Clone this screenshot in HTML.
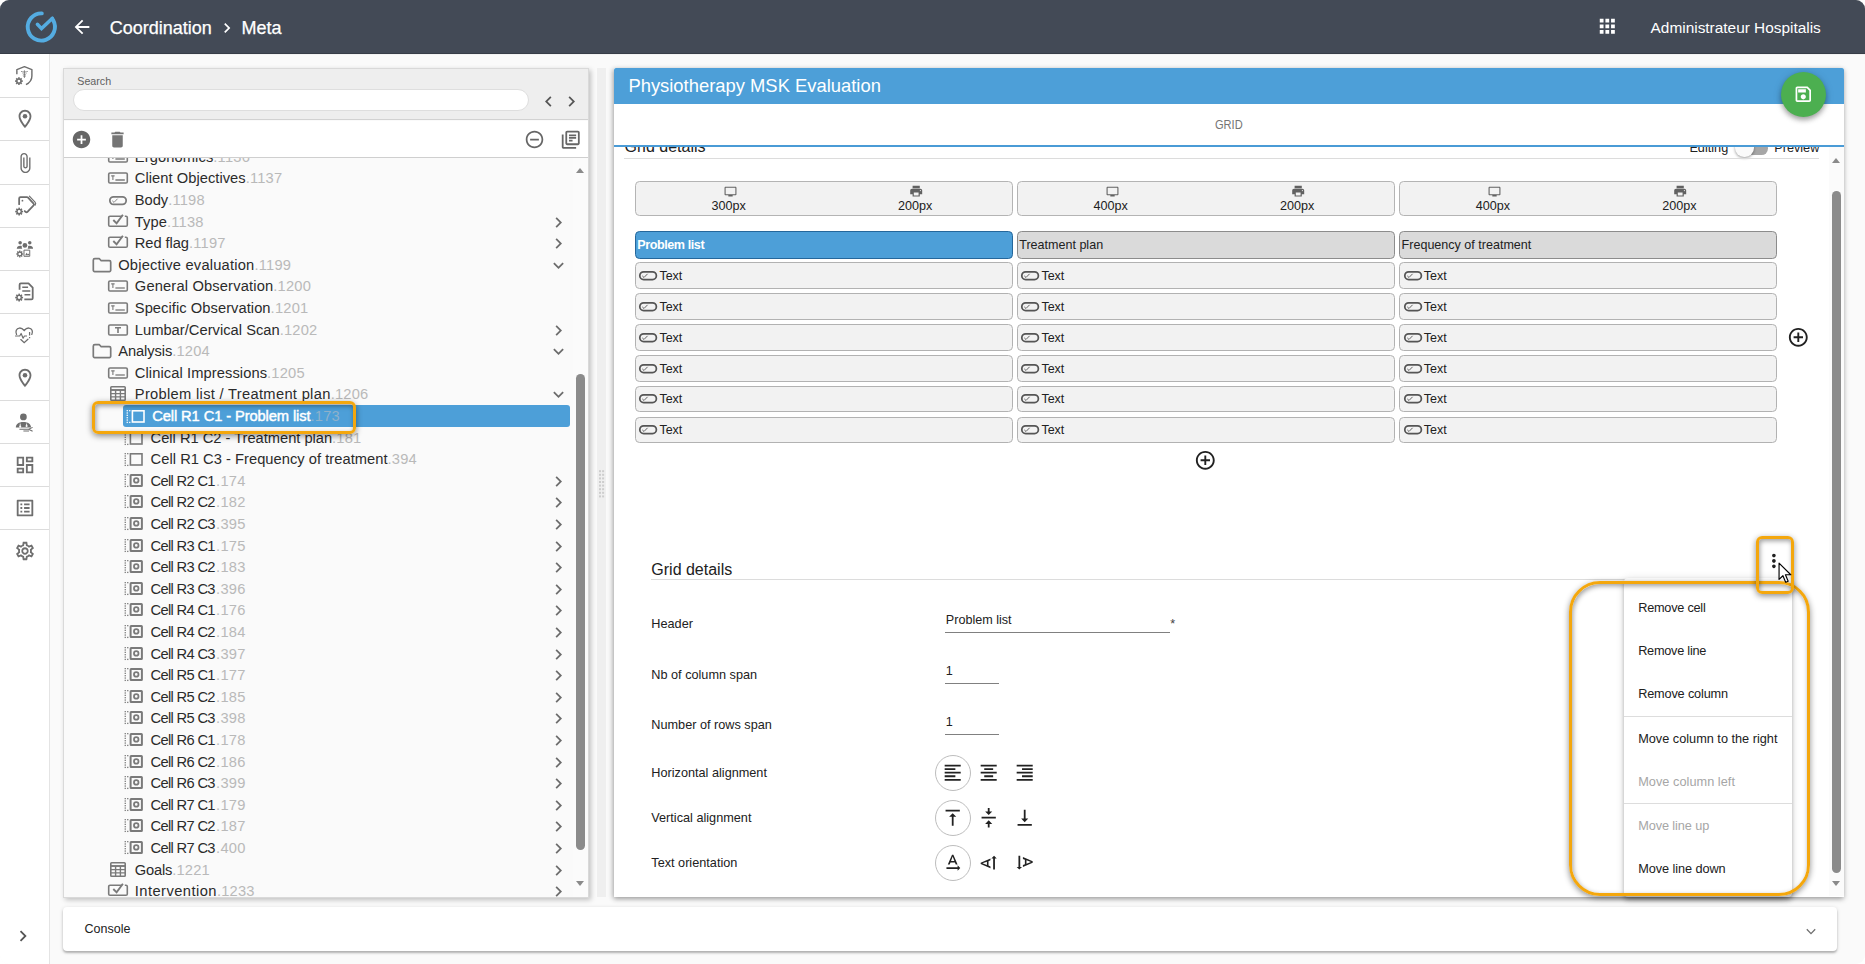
<!DOCTYPE html>
<html lang="en">
<head>
<meta charset="utf-8">
<title>Coordination &gt; Meta</title>
<style>
*{box-sizing:border-box;margin:0;padding:0}
html,body{width:1865px;height:964px;overflow:hidden;background:#fff}
body{font-family:"Liberation Sans",sans-serif;color:#212121;position:relative}
#app{position:absolute;left:0;top:0;width:1865px;height:964px;background:#fafafa;border-radius:9px;overflow:hidden}
.abs,.ic{position:absolute}
svg.ic{display:block;overflow:visible}
/* top bar */
#top{position:absolute;left:0;top:0;width:1865px;height:54px;background:#434a56;border-bottom:1px solid #373d47;box-shadow:0 0 1px rgba(0,0,0,.2)}
#top .t{position:absolute;color:#fff;font-size:18px;line-height:22px;top:16.5px;white-space:nowrap;-webkit-text-stroke:0.25px #fff}
#top .u{position:absolute;color:#fff;font-size:15.4px;line-height:20px;top:17.6px;left:1650.6px;white-space:nowrap}
/* sidebar */
#side{position:absolute;left:0;top:54px;width:50px;height:910px;background:#fff;border-right:1px solid #e4e4e4}
.ssep{position:absolute;left:0;width:49px;height:1px;background:#dcdcdc}
/* left panel */
#lp{position:absolute;left:63px;top:68px;width:526px;height:829.5px;background:#fafafa;border:1px solid #d9d9d9;box-shadow:2px 2px 5px rgba(0,0,0,.23)}
#lp-search{position:absolute;left:64px;top:69px;width:524px;height:51px;background:#eeeeee;border-bottom:1px solid #d2d2d2}
#lp-tools{position:absolute;left:64px;top:121px;width:524px;height:37px;background:#fff;border-bottom:1px solid #cfcfcf}
#slabel{position:absolute;left:77.3px;top:75.3px;font-size:10.7px;line-height:13px;color:#616161}
#sinput{position:absolute;left:73px;top:88.6px;width:456px;height:22.4px;background:#fff;border:1px solid #dedede;border-radius:11.2px}
#treeclip{position:absolute;left:64px;top:158px;width:524px;height:739px;overflow:hidden}
#tree{position:absolute;left:-64px;top:-158px;width:600px;height:964px}
.tr{position:absolute;font-size:14.7px;line-height:22px;height:22px;white-space:nowrap;color:#2b2b2b}
.tr .n{color:#b9b9b9;letter-spacing:.2px}
.tr.sel{color:#fff;-webkit-text-stroke:0.45px #fff}
.tr.sel .n{color:#8fb1cb;-webkit-text-stroke:0}
.selrow{position:absolute;left:123.3px;width:446.7px;height:21.400px;background:#4d9fd8;border-radius:3px}
#tscroll{position:absolute;left:573px;top:158px;width:15px;height:739px;background:#fbfbfb}
.thumb{position:absolute;background:#8b8b8b;border-radius:4.5px}
.arr{position:absolute;width:0;height:0;border-left:4.6px solid transparent;border-right:4.6px solid transparent}
.arr.up{border-bottom:5px solid #8a8a8a}
.arr.dn{border-top:5px solid #8a8a8a}
.hl{position:absolute;border:3.1px solid #f4a70d;box-shadow:0 2px 6px rgba(0,0,0,.45), inset 1px 2px 5px rgba(0,0,0,.38)}
/* splitter */
#split{position:absolute;left:597px;top:68px;width:9px;height:829px;background:#efefef}
/* right panel */
#rp{position:absolute;left:614px;top:68px;width:1230px;height:828.5px;background:#fff;box-shadow:0 2px 5px rgba(0,0,0,.3), -2px 1px 5px rgba(0,0,0,.13)}
#rp-title{position:absolute;left:614px;top:68px;width:1230px;height:36px;background:#4d9fd8;border-radius:2px 2px 0 0}
#rp-title span{position:absolute;left:14.4px;top:6px;font-size:18.4px;line-height:24px;color:#fff;white-space:nowrap}
#rp-line{position:absolute;left:614px;top:145px;width:1230px;height:2px;background:#4a9bd6}
#gridtab{position:absolute;left:1215.200px;top:118.400px;font-size:12.600px;line-height:14px;color:#757575;transform:scaleX(.88);transform-origin:0 0}
#fab{position:absolute;left:1781px;top:72px;width:45px;height:45px;border-radius:50%;background:#4caf50;box-shadow:0 3px 5px rgba(0,0,0,.3),0 1px 8px rgba(0,0,0,.15)}
#rclip{position:absolute;left:614px;top:147px;width:1230px;height:749.5px;overflow:hidden}
#rin{position:absolute;left:-614px;top:-147px;width:1865px;height:964px}
.rule{position:absolute;height:1px;background:#dcdcdc}
.cbox{position:absolute;top:181.2px;height:34.6px;background:#f2f2f2;border:1px solid #b4b4b4;border-radius:4.5px}
.cpx{position:absolute;top:198.6px;width:60px;text-align:center;font-size:12.6px;line-height:15px;color:#212121}
.hcell{position:absolute;top:231.2px;height:27.6px;background:#dadada;border:1px solid #8c8c8c;border-radius:4.5px;font-size:12.55px;line-height:26.800px;padding-left:1.2px;white-space:nowrap;color:#212121}
.hcell.hsel{background:#4d9fd8;border-color:#25679b;color:#fff;font-weight:bold;letter-spacing:-0.42px;font-size:12.6px}
.tcell{position:absolute;background:#f2f2f2;border:1px solid #b2b2b2;border-radius:4.5px}
.ttxt{position:absolute;font-size:12.5px;line-height:16px;color:#212121}
.lbl{position:absolute;left:651.3px;font-size:12.7px;line-height:16px;color:#212121;white-space:nowrap}
.val{position:absolute;left:945.8px;font-size:12.6px;line-height:16px;color:#212121;white-space:nowrap}
.ul{position:absolute;left:945px;height:1px;background:#808080}
.circ{position:absolute;width:36px;height:36px;border:1px solid #bdbdbd;border-radius:50%;left:935.1px}
#h2{position:absolute;left:651.3px;top:560.4px;font-size:16px;line-height:20px;color:#212121;white-space:nowrap}
/* menu */
#menu{position:absolute;left:1624px;top:578px;width:168px;height:319px;background:#fff;border-radius:4px;box-shadow:0 2px 4px -1px rgba(0,0,0,.2),0 4px 5px rgba(0,0,0,.14),0 1px 10px rgba(0,0,0,.12)}
.mi{position:absolute;left:1638.2px;font-size:12.72px;line-height:16px;color:#212121;white-space:nowrap}
.mi.dis{color:#a6a6a6}
.msep{position:absolute;left:1624px;width:168px;height:1px;background:#dddddd}
/* console */
#cons{position:absolute;left:63px;top:907px;width:1773.5px;height:43.6px;background:#fff;border-radius:4px;box-shadow:0 2px 2px rgba(0,0,0,.22),0 1px 4px rgba(0,0,0,.14)}
#cons span{position:absolute;left:21.6px;top:13.6px;font-size:12.5px;line-height:16px;color:#212121}
</style>
</head>
<body>
<div id="app">

<!-- right-edge background beyond panels -->
<div id="top">
  <svg class="ic" style="left:0;top:0" width="70" height="54" viewBox="0 0 70 54">
    <path d="M41.800 13.350A13.600 13.600 0 1 0 53.200 20.300L52.300 18.600" fill="none" stroke="#54ace1" stroke-width="3.900" stroke-linecap="round" stroke-linejoin="round"/>
    <path d="M37.400 24.300l4.100 4.300L52.200 18.400" fill="none" stroke="#54ace1" stroke-width="3.500" stroke-linecap="round" stroke-linejoin="miter"/>
  </svg>
  <svg class="ic" style="left:70.60px;top:16.20px" width="22.0" height="22.0" viewBox="0 0 24 24" fill="#ffffff"><path d="M20 11H7.83l5.59-5.59L12 4l-8 8 8 8 1.41-1.41L7.83 13H20v-2z"/></svg>
  <div class="t" style="left:109.8px">Coordination</div>
  <svg class="ic" style="left:217.40px;top:17.60px" width="20.0" height="20.0" viewBox="0 0 24 24" fill="#ffffff"><path d="M10 6L8.59 7.41 13.17 12l-4.58 4.59L10 18l6-6z"/></svg>
  <div class="t" style="left:241.6px">Meta</div>
  <svg class="ic" style="left:1596.20px;top:15.00px" width="22.6" height="22.6" viewBox="0 0 24 24" fill="#ffffff"><path d="M4 8h4V4H4v4zm6 12h4v-4h-4v4zm-6 0h4v-4H4v4zm0-6h4v-4H4v4zm6 0h4v-4h-4v4zm6-10v4h4V4h-4zm-6 4h4V4h-4v4zm6 6h4v-4h-4v4zm0 6h4v-4h-4v4z"/></svg>
  <div class="u">Administrateur Hospitalis</div>
</div>

<div id="side"></div>
<div class="ssep" style="top:97px"></div>
<div class="ssep" style="top:140px"></div>
<div class="ssep" style="top:184px"></div>
<div class="ssep" style="top:227px"></div>
<div class="ssep" style="top:270px"></div>
<div class="ssep" style="top:313px"></div>
<div class="ssep" style="top:356px"></div>
<div class="ssep" style="top:400px"></div>
<div class="ssep" style="top:443px"></div>
<div class="ssep" style="top:486px"></div>
<div class="ssep" style="top:529px"></div>
<svg class="ic" style="left:12.50px;top:64.10px;" width="23.4" height="23.4" viewBox="0 0 26 26"><path d="M4.300 11.500V6.200L12.700 3l8.300 3.200v7.100c0 4.200-2.600 7.600-6.600 9.600" fill="none" stroke="#6e6e6e" stroke-width="1.600" stroke-linejoin="round"/><path d="M12.700 7v8.500M9 8.200c1.600 1 5.800 1 7.400 0M10.700 10.800c1.400.9 3.200 1 4.200-.1M11 13c1 .8 2.600.9 3.400 0" stroke="#6e6e6e" stroke-width="0.900" fill="none"/><g transform="translate(6.6,19)"><rect x="-0.9" y="-4.300000000000001" width="1.8" height="2.2" transform="rotate(0)" fill="#6e6e6e"/><rect x="-0.9" y="-4.300000000000001" width="1.8" height="2.2" transform="rotate(45)" fill="#6e6e6e"/><rect x="-0.9" y="-4.300000000000001" width="1.8" height="2.2" transform="rotate(90)" fill="#6e6e6e"/><rect x="-0.9" y="-4.300000000000001" width="1.8" height="2.2" transform="rotate(135)" fill="#6e6e6e"/><rect x="-0.9" y="-4.300000000000001" width="1.8" height="2.2" transform="rotate(180)" fill="#6e6e6e"/><rect x="-0.9" y="-4.300000000000001" width="1.8" height="2.2" transform="rotate(225)" fill="#6e6e6e"/><rect x="-0.9" y="-4.300000000000001" width="1.8" height="2.2" transform="rotate(270)" fill="#6e6e6e"/><rect x="-0.9" y="-4.300000000000001" width="1.8" height="2.2" transform="rotate(315)" fill="#6e6e6e"/><circle r="2.3000000000000003" fill="none" stroke="#6e6e6e" stroke-width="1.5"/></g></svg>
<svg class="ic" style="left:13.60px;top:107.60px" width="22" height="22" viewBox="0 0 24 24" fill="#6e6e6e"><path d="M12 2C8.13 2 5 5.13 5 9c0 5.25 7 13 7 13s7-7.75 7-13c0-3.87-3.13-7-7-7zM7 9c0-2.76 2.24-5 5-5s5 2.24 5 5c0 2.88-2.88 7.19-5 9.88C9.92 16.21 7 11.85 7 9z"/><circle cx="12" cy="9" r="2.5"/></svg>
<svg class="ic" style="left:14.00px;top:152.20px" width="22" height="22" viewBox="0 0 24 24" fill="#6e6e6e"><path d="M16.5 6v11.5c0 2.21-1.79 4-4 4s-4-1.79-4-4V5c0-1.38 1.12-2.5 2.5-2.5s2.5 1.12 2.5 2.5v10.5c0 .55-.45 1-1 1s-1-.45-1-1V6H10v9.5c0 1.38 1.12 2.5 2.5 2.5s2.5-1.12 2.5-2.5V5c0-2.21-1.79-4-4-4S7 2.79 7 5v12.5c0 3.04 2.46 5.5 5.5 5.5s5.5-2.46 5.5-5.5V6h-1.5z"/></svg>
<svg class="ic" style="left:12.10px;top:192.70px;" width="25" height="25" viewBox="0 0 28 28"><path d="M8 12.500V6.200c0-.9.600-1.500 1.500-1.500h7.300c.5 0 .9.200 1.200.5l6.200 6.600c.6.600.6 1.500 0 2.100l-6.900 7.200c-.6.600-1.500.6-2.100 0l-.9-.9" fill="none" stroke="#6e6e6e" stroke-width="2" stroke-linecap="round" stroke-linejoin="round"/><path d="M19.500 3.600l6.300 6.600c.9 1 .9 2.300.1 3.300" fill="none" stroke="#6e6e6e" stroke-width="1.300" stroke-linecap="round"/><circle cx="11.700" cy="8.600" r="1" fill="#6e6e6e"/><g transform="translate(8,20.8)"><rect x="-0.9" y="-4.4" width="1.8" height="2.2" transform="rotate(0)" fill="#6e6e6e"/><rect x="-0.9" y="-4.4" width="1.8" height="2.2" transform="rotate(45)" fill="#6e6e6e"/><rect x="-0.9" y="-4.4" width="1.8" height="2.2" transform="rotate(90)" fill="#6e6e6e"/><rect x="-0.9" y="-4.4" width="1.8" height="2.2" transform="rotate(135)" fill="#6e6e6e"/><rect x="-0.9" y="-4.4" width="1.8" height="2.2" transform="rotate(180)" fill="#6e6e6e"/><rect x="-0.9" y="-4.4" width="1.8" height="2.2" transform="rotate(225)" fill="#6e6e6e"/><rect x="-0.9" y="-4.4" width="1.8" height="2.2" transform="rotate(270)" fill="#6e6e6e"/><rect x="-0.9" y="-4.4" width="1.8" height="2.2" transform="rotate(315)" fill="#6e6e6e"/><circle r="2.4" fill="none" stroke="#6e6e6e" stroke-width="1.5"/></g></svg>
<svg class="ic" style="left:13.85px;top:239.00px;" width="21.5" height="20" viewBox="0 0 28 26"><circle cx="8" cy="5" r="2.3" fill="#6e6e6e"/><circle cx="20.5" cy="5" r="2.3" fill="#6e6e6e"/><circle cx="14.2" cy="8.4" r="3.1" fill="#6e6e6e"/><path d="M3.6 12.6c0-2.4 2-3.9 4.4-3.9 1 0 1.7.2 2.3.6-.5 1-.2 2.2.6 3.3zM24.9 12.6c0-2.4-2-3.9-4.400-3.900-1 0-1.700.2-2.300.6.5 1 .2 2.200-.6 3.300z" fill="#6e6e6e"/><path d="M13 14.5h7.500v8H13z" fill="none" stroke="#6e6e6e" stroke-width="1.3"/><path d="M14.500 21l2-3 1.500 2 1-1.200 1.200 2.200z" fill="#6e6e6e"/><g transform="translate(7.5,19.5)"><rect x="-0.9" y="-4.5" width="1.8" height="2.2" transform="rotate(0)" fill="#6e6e6e"/><rect x="-0.9" y="-4.5" width="1.8" height="2.2" transform="rotate(45)" fill="#6e6e6e"/><rect x="-0.9" y="-4.5" width="1.8" height="2.2" transform="rotate(90)" fill="#6e6e6e"/><rect x="-0.9" y="-4.5" width="1.8" height="2.2" transform="rotate(135)" fill="#6e6e6e"/><rect x="-0.9" y="-4.5" width="1.8" height="2.2" transform="rotate(180)" fill="#6e6e6e"/><rect x="-0.9" y="-4.5" width="1.8" height="2.2" transform="rotate(225)" fill="#6e6e6e"/><rect x="-0.9" y="-4.5" width="1.8" height="2.2" transform="rotate(270)" fill="#6e6e6e"/><rect x="-0.9" y="-4.5" width="1.8" height="2.2" transform="rotate(315)" fill="#6e6e6e"/><circle r="2.5" fill="none" stroke="#6e6e6e" stroke-width="1.5"/></g></svg>
<svg class="ic" style="left:12.00px;top:279.10px;" width="25" height="25" viewBox="0 0 28 28"><path d="M8.500 12V6.300c0-.8.6-1.400 1.400-1.400h8.600l4.700 4.800v11.800c0 .8-.6 1.400-1.400 1.400h-8" fill="none" stroke="#6e6e6e" stroke-width="2" stroke-linejoin="round"/><path d="M11.500 9.300h6.500M11.500 13.500h9M14 17.700h6.500" stroke="#6e6e6e" stroke-width="1.800"/><g transform="translate(8,20.8)"><rect x="-0.9" y="-4.4" width="1.8" height="2.2" transform="rotate(0)" fill="#6e6e6e"/><rect x="-0.9" y="-4.4" width="1.8" height="2.2" transform="rotate(45)" fill="#6e6e6e"/><rect x="-0.9" y="-4.4" width="1.8" height="2.2" transform="rotate(90)" fill="#6e6e6e"/><rect x="-0.9" y="-4.4" width="1.8" height="2.2" transform="rotate(135)" fill="#6e6e6e"/><rect x="-0.9" y="-4.4" width="1.8" height="2.2" transform="rotate(180)" fill="#6e6e6e"/><rect x="-0.9" y="-4.4" width="1.8" height="2.2" transform="rotate(225)" fill="#6e6e6e"/><rect x="-0.9" y="-4.4" width="1.8" height="2.2" transform="rotate(270)" fill="#6e6e6e"/><rect x="-0.9" y="-4.4" width="1.8" height="2.2" transform="rotate(315)" fill="#6e6e6e"/><circle r="2.4" fill="none" stroke="#6e6e6e" stroke-width="1.5"/></g></svg>
<svg class="ic" style="left:13.10px;top:325.15px;" width="23" height="19.7" viewBox="0 0 28 24"><path d="M4.300 11.500C2.600 8.200 4 4 7.800 3.700c2.300-.2 4.200 1.100 5.800 3 1.600-1.900 3.500-3.200 5.800-3 3.800.3 5.200 4.500 3.500 7.800" fill="none" stroke="#6e6e6e" stroke-width="1.600" stroke-linecap="round"/><path d="M2.500 13.400h5.700l1.700-3.100 2.400 5.800 1.600-2.700h3.200" fill="none" stroke="#6e6e6e" stroke-width="1.400" stroke-linejoin="round"/><path d="M9.500 17.800l4.100 3.700 4.600-4.100" fill="none" stroke="#6e6e6e" stroke-width="1.600" stroke-linecap="round"/><path d="M20.200 8.500v4.300M20.200 14.600v1.600" stroke="#6e6e6e" stroke-width="1.500"/></svg>
<svg class="ic" style="left:13.60px;top:366.80px" width="22" height="22" viewBox="0 0 24 24" fill="#6e6e6e"><path d="M12 2C8.13 2 5 5.13 5 9c0 5.25 7 13 7 13s7-7.75 7-13c0-3.87-3.13-7-7-7zM7 9c0-2.76 2.24-5 5-5s5 2.24 5 5c0 2.88-2.88 7.19-5 9.88C9.92 16.21 7 11.85 7 9z"/><circle cx="12" cy="9" r="2.5"/></svg>
<svg class="ic" style="left:13.40px;top:411.60px;" width="22.4" height="20.8" viewBox="0 0 28 26"><circle cx="13" cy="6.200" r="4.200" fill="#6e6e6e"/><path d="M3.500 19.500c0-4.400 3.600-7 9.500-7s9.500 2.600 9.500 7z" fill="#6e6e6e"/><path d="M9 14.500v3.500M17 14.500v2.500" stroke="#fff" stroke-width="1.100"/><circle cx="9" cy="18.300" r="1.300" fill="#fff"/><circle cx="17" cy="17.500" r="1.300" fill="#fff"/><path d="M8 21.600h11.500M24.500 19.200l-5 2.400 5 2.400M13 23.800h7" stroke="#6e6e6e" stroke-width="1.300" fill="none"/></svg>
<svg class="ic" style="left:13.80px;top:453.60px" width="22" height="22" viewBox="0 0 24 24" fill="#6e6e6e"><path d="M19 5v2h-4V5h4M9 5v6H5V5h4m10 8v6h-4v-6h4M9 17v2H5v-2h4M21 3h-8v6h8V3zM11 3H3v10h8V3zm10 8h-8v10h8V11zm-10 4H3v6h8v-6z"/></svg>
<svg class="ic" style="left:13.60px;top:496.80px" width="22" height="22" viewBox="0 0 24 24" fill="#6e6e6e"><path d="M11 7h6v2h-6zm0 4h6v2h-6zm0 4h6v2h-6zM7 7h2v2H7zm0 4h2v2H7zm0 4h2v2H7zM20.1 3H3.9c-.5 0-.9.4-.9.9v16.2c0 .4.4.9.9.9h16.2c.4 0 .9-.5.9-.9V3.9c0-.5-.5-.9-.9-.9zM19 19H5V5h14v14z"/></svg>
<svg class="ic" style="left:13.60px;top:540.00px" width="22" height="22" viewBox="0 0 24 24" fill="#6e6e6e"><path d="M19.43 12.98c.04-.32.07-.64.07-.98 0-.34-.03-.66-.07-.98l2.11-1.65c.19-.15.24-.42.12-.64l-2-3.46c-.09-.16-.26-.25-.44-.25-.06 0-.12.01-.17.03l-2.49 1c-.52-.4-1.08-.73-1.69-.98l-.38-2.65C14.46 2.18 14.25 2 14 2h-4c-.25 0-.46.18-.49.42l-.38 2.65c-.61.25-1.17.59-1.69.98l-2.49-1c-.06-.02-.12-.03-.18-.03-.17 0-.34.09-.43.25l-2 3.46c-.13.22-.07.49.12.64l2.11 1.65c-.04.32-.07.65-.07.98 0 .33.03.66.07.98l-2.11 1.65c-.19.15-.24.42-.12.64l2 3.46c.09.16.26.25.44.25.06 0 .12-.01.17-.03l2.49-1c.52.4 1.08.73 1.69.98l.38 2.65c.03.24.24.42.49.42h4c.25 0 .46-.18.49-.42l.38-2.65c.61-.25 1.17-.59 1.69-.98l2.49 1c.06.02.12.03.18.03.17 0 .34-.09.43-.25l2-3.46c.12-.22.07-.49-.12-.64l-2.11-1.65zm-1.98-1.71c.04.31.05.52.05.73 0 .21-.02.43-.05.73l-.14 1.13.89.7 1.08.84-.7 1.21-1.27-.51-1.04-.42-.9.68c-.43.32-.84.56-1.25.73l-1.06.43-.16 1.13-.2 1.35h-1.4l-.19-1.35-.16-1.13-1.06-.43c-.43-.18-.83-.41-1.23-.71l-.91-.7-1.06.43-1.27.51-.7-1.21 1.08-.84.89-.7-.14-1.13c-.03-.31-.05-.54-.05-.74s.02-.43.05-.73l.14-1.13-.89-.7-1.08-.84.7-1.21 1.27.51 1.04.42.9-.68c.43-.32.84-.56 1.25-.73l1.06-.43.16-1.13.2-1.35h1.39l.19 1.35.16 1.13 1.06.43c.43.18.83.41 1.23.71l.91.7 1.06-.43 1.27-.51.7 1.21-1.07.85-.89.7.14 1.13zM12 8c-2.21 0-4 1.79-4 4s1.79 4 4 4 4-1.79 4-4-1.79-4-4-4zm0 6c-1.1 0-2-.9-2-2s.9-2 2-2 2 .9 2 2-.9 2-2 2z"/></svg>
<svg class="ic" style="left:12.30px;top:925.40px" width="22" height="22" viewBox="0 0 24 24" fill="#555"><path d="M10 6L8.59 7.41 13.17 12l-4.58 4.59L10 18l6-6z"/></svg>

<!-- left panel -->
<div id="lp"></div>
<div id="lp-search"></div>
<div id="slabel">Search</div>
<div id="sinput"></div>
<svg class="ic" style="left:537.90px;top:90.50px" width="21.0" height="21.0" viewBox="0 0 24 24" fill="#555555"><path d="M15.41 7.41L14 6l-6 6 6 6 1.41-1.41L10.83 12z"/></svg>
<svg class="ic" style="left:560.70px;top:90.50px" width="21.0" height="21.0" viewBox="0 0 24 24" fill="#555555"><path d="M10 6L8.59 7.41 13.17 12l-4.58 4.59L10 18l6-6z"/></svg>
<div id="lp-tools"></div>
<svg class="ic" style="left:71.40px;top:129.30px" width="21.0" height="21.0" viewBox="0 0 24 24" fill="#666666"><path d="M12 2C6.48 2 2 6.48 2 12s4.48 10 10 10 10-4.48 10-10S17.52 2 12 2zm5 11h-4v4h-2v-4H7v-2h4V7h2v4h4v2z"/></svg>
<svg class="ic" style="left:107.30px;top:129.30px" width="21.0" height="21.0" viewBox="0 0 24 24" fill="#757575"><path d="M6 19c0 1.1.9 2 2 2h8c1.1 0 2-.9 2-2V7H6v12zM19 4h-3.5l-1-1h-5l-1 1H5v2h14V4z"/></svg>
<svg class="ic" style="left:524.30px;top:129.10px" width="21.0" height="21.0" viewBox="0 0 24 24" fill="#666666"><path d="M7 11v2h10v-2H7zm5-9C6.48 2 2 6.48 2 12s4.48 10 10 10 10-4.48 10-10S17.52 2 12 2zm0 18c-4.41 0-8-3.59-8-8s3.59-8 8-8 8 3.59 8 8-3.59 8-8 8z"/></svg>
<svg class="ic" style="left:560.25px;top:128.95px" width="21.5" height="21.5" viewBox="0 0 24 24" fill="#666666"><path d="M4 6H2v14c0 1.1.9 2 2 2h14v-2H4V6zm16-4H8c-1.1 0-2 .9-2 2v12c0 1.1.9 2 2 2h12c1.1 0 2-.9 2-2V4c0-1.1-.9-2-2-2zm0 14H8V4h12v12zM10 9h8v2h-8zm0 3h4v2h-4zm0-6h8v2h-8z"/></svg>
<div id="treeclip"><div id="tree">
<svg class="ic" style="left:106.70px;top:150.00px;" width="22" height="14" viewBox="0 0 22 14"><rect x="1.7" y="2" width="18.600" height="10" rx="1.300" fill="none" stroke="#7a7a7a" stroke-width="1.600"/><path d="M4.200 4.900h3.400M5.900 4.900v4.200" stroke="#7a7a7a" stroke-width="1.100" fill="none"/><path d="M8.400 9h9.400" stroke="#7a7a7a" stroke-width="1.300"/></svg>
<div class="tr" style="left:134.8px;top:146.0px;letter-spacing:0.1px">Ergonomics<span class="n">.1136</span></div>
<svg class="ic" style="left:106.70px;top:171.00px;" width="22" height="14" viewBox="0 0 22 14"><rect x="1.7" y="2" width="18.600" height="10" rx="1.300" fill="none" stroke="#7a7a7a" stroke-width="1.600"/><path d="M4.200 4.900h3.400M5.900 4.900v4.200" stroke="#7a7a7a" stroke-width="1.100" fill="none"/><path d="M8.400 9h9.400" stroke="#7a7a7a" stroke-width="1.300"/></svg>
<div class="tr" style="left:134.8px;top:167.0px;letter-spacing:0.04px">Client Objectives<span class="n">.1137</span></div>
<svg class="ic" style="left:107.90px;top:194.50px;" width="20" height="11.2" viewBox="0 0 20 11.2"><rect x="1.8" y="1.8" width="16.4" height="7.6" rx="3.8" fill="none" stroke="#7a7a7a" stroke-width="1.8"/><path d="M4.3 5.8l1.7 1.6 3.6-3.7" stroke="#7a7a7a" stroke-width="0.9" fill="none"/></svg>
<div class="tr" style="left:134.8px;top:189.0px;letter-spacing:-0.03px">Body<span class="n">.1198</span></div>
<svg class="ic" style="left:106.70px;top:213.30px;" width="22" height="15" viewBox="0 0 22 15"><path d="M15.200 3.200H3a1.300 1.300 0 0 0-1.300 1.300v7.400a1.300 1.300 0 0 0 1.300 1.300h16a1.300 1.300 0 0 0 1.300-1.300V4.500a1.300 1.300 0 0 0-1.300-1.300h-1.200" fill="none" stroke="#7a7a7a" stroke-width="1.600"/><path d="M6.300 7l3.300 3.400 6.300-8.600" fill="none" stroke="#7a7a7a" stroke-width="1.900"/></svg>
<div class="tr" style="left:134.8px;top:211.0px;letter-spacing:0.08px">Type<span class="n">.1138</span></div>
<svg class="ic" style="left:548.10px;top:211.50px" width="21" height="21" viewBox="0 0 24 24" fill="#6b6b6b"><path d="M10 6L8.59 7.41 13.17 12l-4.58 4.59L10 18l6-6z"/></svg>
<svg class="ic" style="left:106.70px;top:234.30px;" width="22" height="15" viewBox="0 0 22 15"><path d="M15.200 3.200H3a1.300 1.300 0 0 0-1.300 1.300v7.400a1.300 1.300 0 0 0 1.300 1.300h16a1.300 1.300 0 0 0 1.300-1.300V4.500a1.300 1.300 0 0 0-1.300-1.300h-1.200" fill="none" stroke="#7a7a7a" stroke-width="1.600"/><path d="M6.300 7l3.300 3.400 6.300-8.600" fill="none" stroke="#7a7a7a" stroke-width="1.900"/></svg>
<div class="tr" style="left:134.8px;top:232.0px;letter-spacing:-0.07px">Red flag<span class="n">.1197</span></div>
<svg class="ic" style="left:548.10px;top:232.50px" width="21" height="21" viewBox="0 0 24 24" fill="#6b6b6b"><path d="M10 6L8.59 7.41 13.17 12l-4.58 4.59L10 18l6-6z"/></svg>
<svg class="ic" style="left:92.00px;top:257.00px;" width="20" height="16" viewBox="0 0 20 16"><path d="M1.3 3.2a1.5 1.5 0 0 1 1.5-1.5h4.6l1.8 2h8.2a1.3 1.3 0 0 1 1.3 1.3v8.3a1.3 1.3 0 0 1-1.3 1.3H2.6a1.3 1.3 0 0 1-1.3-1.3z" fill="none" stroke="#7a7a7a" stroke-width="1.700" stroke-linejoin="round"/></svg>
<div class="tr" style="left:118.2px;top:254.0px;letter-spacing:0.2px">Objective evaluation<span class="n">.1199</span></div>
<svg class="ic" style="left:548.10px;top:254.80px" width="21" height="21" viewBox="0 0 24 24" fill="#6b6b6b"><path d="M16.59 8.59L12 13.17 7.41 8.59 6 10l6 6 6-6z"/></svg>
<svg class="ic" style="left:106.70px;top:279.00px;" width="22" height="14" viewBox="0 0 22 14"><rect x="1.7" y="2" width="18.600" height="10" rx="1.300" fill="none" stroke="#7a7a7a" stroke-width="1.600"/><path d="M4.200 4.900h3.400M5.900 4.900v4.200" stroke="#7a7a7a" stroke-width="1.100" fill="none"/><path d="M8.400 9h9.400" stroke="#7a7a7a" stroke-width="1.300"/></svg>
<div class="tr" style="left:134.8px;top:275.0px;letter-spacing:0.156px">General Observation<span class="n">.1200</span></div>
<svg class="ic" style="left:106.70px;top:301.00px;" width="22" height="14" viewBox="0 0 22 14"><rect x="1.7" y="2" width="18.600" height="10" rx="1.300" fill="none" stroke="#7a7a7a" stroke-width="1.600"/><path d="M4.200 4.900h3.400M5.900 4.900v4.200" stroke="#7a7a7a" stroke-width="1.100" fill="none"/><path d="M8.400 9h9.400" stroke="#7a7a7a" stroke-width="1.300"/></svg>
<div class="tr" style="left:134.8px;top:297.0px;letter-spacing:0.055px">Specific Observation<span class="n">.1201</span></div>
<svg class="ic" style="left:106.70px;top:323.00px;" width="22" height="14" viewBox="0 0 22 14"><rect x="1.700" y="2" width="18.600" height="10" rx="1.300" fill="none" stroke="#7a7a7a" stroke-width="1.600"/><path d="M8 4.700h6M11 4.700v5.200" stroke="#7a7a7a" stroke-width="1.600" fill="none"/></svg>
<div class="tr" style="left:134.8px;top:319.0px;letter-spacing:0.02px">Lumbar/Cervical Scan<span class="n">.1202</span></div>
<svg class="ic" style="left:548.10px;top:319.50px" width="21" height="21" viewBox="0 0 24 24" fill="#6b6b6b"><path d="M10 6L8.59 7.41 13.17 12l-4.58 4.59L10 18l6-6z"/></svg>
<svg class="ic" style="left:92.00px;top:343.00px;" width="20" height="16" viewBox="0 0 20 16"><path d="M1.3 3.2a1.5 1.5 0 0 1 1.5-1.5h4.6l1.8 2h8.2a1.3 1.3 0 0 1 1.3 1.3v8.3a1.3 1.3 0 0 1-1.3 1.3H2.6a1.3 1.3 0 0 1-1.3-1.3z" fill="none" stroke="#7a7a7a" stroke-width="1.700" stroke-linejoin="round"/></svg>
<div class="tr" style="left:118.2px;top:340.0px;letter-spacing:-0.09px">Analysis<span class="n">.1204</span></div>
<svg class="ic" style="left:548.10px;top:340.80px" width="21" height="21" viewBox="0 0 24 24" fill="#6b6b6b"><path d="M16.59 8.59L12 13.17 7.41 8.59 6 10l6 6 6-6z"/></svg>
<svg class="ic" style="left:106.70px;top:366.00px;" width="22" height="14" viewBox="0 0 22 14"><rect x="1.7" y="2" width="18.600" height="10" rx="1.300" fill="none" stroke="#7a7a7a" stroke-width="1.600"/><path d="M4.200 4.900h3.400M5.900 4.900v4.200" stroke="#7a7a7a" stroke-width="1.100" fill="none"/><path d="M8.400 9h9.400" stroke="#7a7a7a" stroke-width="1.300"/></svg>
<div class="tr" style="left:134.8px;top:362.0px;letter-spacing:0.085px">Clinical Impressions<span class="n">.1205</span></div>
<svg class="ic" style="left:108.70px;top:385.20px;" width="18" height="17" viewBox="0 0 18 17"><rect x="1.800" y="1.700" width="14.400" height="13.600" rx="0.800" fill="none" stroke="#7a7a7a" stroke-width="1.600"/><path d="M1.800 5h14.400" stroke="#7a7a7a" stroke-width="1.900"/><path d="M1.800 8.600h14.400M1.800 11.900h14.400M6.600 5v10.300M11.400 5v10.300" stroke="#7a7a7a" stroke-width="1.400"/></svg>
<div class="tr" style="left:134.8px;top:383.0px;letter-spacing:0.307px">Problem list / Treatment plan<span class="n">.1206</span></div>
<svg class="ic" style="left:548.10px;top:383.80px" width="21" height="21" viewBox="0 0 24 24" fill="#6b6b6b"><path d="M16.59 8.59L12 13.17 7.41 8.59 6 10l6 6 6-6z"/></svg>
<div class="selrow" style="top:405.2px"></div>
<svg class="ic" style="left:126.00px;top:407.50px;" width="20" height="17" viewBox="0 0 20 17"><rect x="0.600" y="2.00" width="1.300" height="1.300" fill="#ffffff"/><rect x="0.600" y="4.35" width="1.300" height="1.300" fill="#ffffff"/><rect x="0.600" y="6.70" width="1.300" height="1.300" fill="#ffffff"/><rect x="0.600" y="9.05" width="1.300" height="1.300" fill="#ffffff"/><rect x="0.600" y="11.40" width="1.300" height="1.300" fill="#ffffff"/><rect x="0.600" y="13.75" width="1.300" height="1.300" fill="#ffffff"/><rect x="3.100" y="2" width="1.300" height="1.300" fill="#ffffff"/><rect x="3.100" y="13.750" width="1.300" height="1.300" fill="#ffffff"/><rect x="6.400" y="2.800" width="11.600" height="11.200" fill="none" stroke="#ffffff" stroke-width="1.600"/></svg>
<div class="tr sel" style="left:152.2px;top:405.0px;letter-spacing:-0.1px">Cell R1 C1 - Problem list<span class="n">.173</span></div>
<svg class="ic" style="left:124.00px;top:429.50px;" width="20" height="17" viewBox="0 0 20 17"><rect x="0.600" y="2.00" width="1.300" height="1.300" fill="#7a7a7a"/><rect x="0.600" y="4.35" width="1.300" height="1.300" fill="#7a7a7a"/><rect x="0.600" y="6.70" width="1.300" height="1.300" fill="#7a7a7a"/><rect x="0.600" y="9.05" width="1.300" height="1.300" fill="#7a7a7a"/><rect x="0.600" y="11.40" width="1.300" height="1.300" fill="#7a7a7a"/><rect x="0.600" y="13.75" width="1.300" height="1.300" fill="#7a7a7a"/><rect x="3.100" y="2" width="1.300" height="1.300" fill="#7a7a7a"/><rect x="3.100" y="13.750" width="1.300" height="1.300" fill="#7a7a7a"/><rect x="6.400" y="2.800" width="11.600" height="11.200" fill="none" stroke="#7a7a7a" stroke-width="1.600"/></svg>
<div class="tr" style="left:150.6px;top:427.0px;letter-spacing:-0.02px">Cell R1 C2 - Treatment plan<span class="n">.181</span></div>
<svg class="ic" style="left:124.00px;top:450.50px;" width="20" height="17" viewBox="0 0 20 17"><rect x="0.600" y="2.00" width="1.300" height="1.300" fill="#7a7a7a"/><rect x="0.600" y="4.35" width="1.300" height="1.300" fill="#7a7a7a"/><rect x="0.600" y="6.70" width="1.300" height="1.300" fill="#7a7a7a"/><rect x="0.600" y="9.05" width="1.300" height="1.300" fill="#7a7a7a"/><rect x="0.600" y="11.40" width="1.300" height="1.300" fill="#7a7a7a"/><rect x="0.600" y="13.75" width="1.300" height="1.300" fill="#7a7a7a"/><rect x="3.100" y="2" width="1.300" height="1.300" fill="#7a7a7a"/><rect x="3.100" y="13.750" width="1.300" height="1.300" fill="#7a7a7a"/><rect x="6.400" y="2.800" width="11.600" height="11.200" fill="none" stroke="#7a7a7a" stroke-width="1.600"/></svg>
<div class="tr" style="left:150.6px;top:448.0px;letter-spacing:0.03px">Cell R1 C3 - Frequency of treatment<span class="n">.394</span></div>
<svg class="ic" style="left:124.20px;top:471.90px;" width="20" height="17" viewBox="0 0 20 17"><rect x="0.600" y="2.00" width="1.300" height="1.300" fill="#7a7a7a"/><rect x="0.600" y="4.35" width="1.300" height="1.300" fill="#7a7a7a"/><rect x="0.600" y="6.70" width="1.300" height="1.300" fill="#7a7a7a"/><rect x="0.600" y="9.05" width="1.300" height="1.300" fill="#7a7a7a"/><rect x="0.600" y="11.40" width="1.300" height="1.300" fill="#7a7a7a"/><rect x="0.600" y="13.75" width="1.300" height="1.300" fill="#7a7a7a"/><rect x="3.100" y="2" width="1.300" height="1.300" fill="#7a7a7a"/><rect x="3.100" y="13.750" width="1.300" height="1.300" fill="#7a7a7a"/><rect x="6.600" y="2.900" width="11.300" height="11" rx="0.500" fill="none" stroke="#7a7a7a" stroke-width="2"/><circle cx="12.250" cy="8.400" r="2.250" fill="none" stroke="#7a7a7a" stroke-width="1.800"/></svg>
<div class="tr" style="left:150.6px;top:470.0px;letter-spacing:-0.68px">Cell R2 C1<span class="n" style="margin-left:1.3px">.174</span></div>
<svg class="ic" style="left:548.10px;top:470.50px" width="21" height="21" viewBox="0 0 24 24" fill="#6b6b6b"><path d="M10 6L8.59 7.41 13.17 12l-4.58 4.59L10 18l6-6z"/></svg>
<svg class="ic" style="left:124.20px;top:492.90px;" width="20" height="17" viewBox="0 0 20 17"><rect x="0.600" y="2.00" width="1.300" height="1.300" fill="#7a7a7a"/><rect x="0.600" y="4.35" width="1.300" height="1.300" fill="#7a7a7a"/><rect x="0.600" y="6.70" width="1.300" height="1.300" fill="#7a7a7a"/><rect x="0.600" y="9.05" width="1.300" height="1.300" fill="#7a7a7a"/><rect x="0.600" y="11.40" width="1.300" height="1.300" fill="#7a7a7a"/><rect x="0.600" y="13.75" width="1.300" height="1.300" fill="#7a7a7a"/><rect x="3.100" y="2" width="1.300" height="1.300" fill="#7a7a7a"/><rect x="3.100" y="13.750" width="1.300" height="1.300" fill="#7a7a7a"/><rect x="6.600" y="2.900" width="11.300" height="11" rx="0.500" fill="none" stroke="#7a7a7a" stroke-width="2"/><circle cx="12.250" cy="8.400" r="2.250" fill="none" stroke="#7a7a7a" stroke-width="1.800"/></svg>
<div class="tr" style="left:150.6px;top:491.0px;letter-spacing:-0.68px">Cell R2 C2<span class="n" style="margin-left:1.3px">.182</span></div>
<svg class="ic" style="left:548.10px;top:491.50px" width="21" height="21" viewBox="0 0 24 24" fill="#6b6b6b"><path d="M10 6L8.59 7.41 13.17 12l-4.58 4.59L10 18l6-6z"/></svg>
<svg class="ic" style="left:124.20px;top:514.90px;" width="20" height="17" viewBox="0 0 20 17"><rect x="0.600" y="2.00" width="1.300" height="1.300" fill="#7a7a7a"/><rect x="0.600" y="4.35" width="1.300" height="1.300" fill="#7a7a7a"/><rect x="0.600" y="6.70" width="1.300" height="1.300" fill="#7a7a7a"/><rect x="0.600" y="9.05" width="1.300" height="1.300" fill="#7a7a7a"/><rect x="0.600" y="11.40" width="1.300" height="1.300" fill="#7a7a7a"/><rect x="0.600" y="13.75" width="1.300" height="1.300" fill="#7a7a7a"/><rect x="3.100" y="2" width="1.300" height="1.300" fill="#7a7a7a"/><rect x="3.100" y="13.750" width="1.300" height="1.300" fill="#7a7a7a"/><rect x="6.600" y="2.900" width="11.300" height="11" rx="0.500" fill="none" stroke="#7a7a7a" stroke-width="2"/><circle cx="12.250" cy="8.400" r="2.250" fill="none" stroke="#7a7a7a" stroke-width="1.800"/></svg>
<div class="tr" style="left:150.6px;top:513.0px;letter-spacing:-0.68px">Cell R2 C3<span class="n" style="margin-left:1.3px">.395</span></div>
<svg class="ic" style="left:548.10px;top:513.50px" width="21" height="21" viewBox="0 0 24 24" fill="#6b6b6b"><path d="M10 6L8.59 7.41 13.17 12l-4.58 4.59L10 18l6-6z"/></svg>
<svg class="ic" style="left:124.20px;top:536.90px;" width="20" height="17" viewBox="0 0 20 17"><rect x="0.600" y="2.00" width="1.300" height="1.300" fill="#7a7a7a"/><rect x="0.600" y="4.35" width="1.300" height="1.300" fill="#7a7a7a"/><rect x="0.600" y="6.70" width="1.300" height="1.300" fill="#7a7a7a"/><rect x="0.600" y="9.05" width="1.300" height="1.300" fill="#7a7a7a"/><rect x="0.600" y="11.40" width="1.300" height="1.300" fill="#7a7a7a"/><rect x="0.600" y="13.75" width="1.300" height="1.300" fill="#7a7a7a"/><rect x="3.100" y="2" width="1.300" height="1.300" fill="#7a7a7a"/><rect x="3.100" y="13.750" width="1.300" height="1.300" fill="#7a7a7a"/><rect x="6.600" y="2.900" width="11.300" height="11" rx="0.500" fill="none" stroke="#7a7a7a" stroke-width="2"/><circle cx="12.250" cy="8.400" r="2.250" fill="none" stroke="#7a7a7a" stroke-width="1.800"/></svg>
<div class="tr" style="left:150.6px;top:535.0px;letter-spacing:-0.68px">Cell R3 C1<span class="n" style="margin-left:1.3px">.175</span></div>
<svg class="ic" style="left:548.10px;top:535.50px" width="21" height="21" viewBox="0 0 24 24" fill="#6b6b6b"><path d="M10 6L8.59 7.41 13.17 12l-4.58 4.59L10 18l6-6z"/></svg>
<svg class="ic" style="left:124.20px;top:557.90px;" width="20" height="17" viewBox="0 0 20 17"><rect x="0.600" y="2.00" width="1.300" height="1.300" fill="#7a7a7a"/><rect x="0.600" y="4.35" width="1.300" height="1.300" fill="#7a7a7a"/><rect x="0.600" y="6.70" width="1.300" height="1.300" fill="#7a7a7a"/><rect x="0.600" y="9.05" width="1.300" height="1.300" fill="#7a7a7a"/><rect x="0.600" y="11.40" width="1.300" height="1.300" fill="#7a7a7a"/><rect x="0.600" y="13.75" width="1.300" height="1.300" fill="#7a7a7a"/><rect x="3.100" y="2" width="1.300" height="1.300" fill="#7a7a7a"/><rect x="3.100" y="13.750" width="1.300" height="1.300" fill="#7a7a7a"/><rect x="6.600" y="2.900" width="11.300" height="11" rx="0.500" fill="none" stroke="#7a7a7a" stroke-width="2"/><circle cx="12.250" cy="8.400" r="2.250" fill="none" stroke="#7a7a7a" stroke-width="1.800"/></svg>
<div class="tr" style="left:150.6px;top:556.0px;letter-spacing:-0.68px">Cell R3 C2<span class="n" style="margin-left:1.3px">.183</span></div>
<svg class="ic" style="left:548.10px;top:556.50px" width="21" height="21" viewBox="0 0 24 24" fill="#6b6b6b"><path d="M10 6L8.59 7.41 13.17 12l-4.58 4.59L10 18l6-6z"/></svg>
<svg class="ic" style="left:124.20px;top:579.90px;" width="20" height="17" viewBox="0 0 20 17"><rect x="0.600" y="2.00" width="1.300" height="1.300" fill="#7a7a7a"/><rect x="0.600" y="4.35" width="1.300" height="1.300" fill="#7a7a7a"/><rect x="0.600" y="6.70" width="1.300" height="1.300" fill="#7a7a7a"/><rect x="0.600" y="9.05" width="1.300" height="1.300" fill="#7a7a7a"/><rect x="0.600" y="11.40" width="1.300" height="1.300" fill="#7a7a7a"/><rect x="0.600" y="13.75" width="1.300" height="1.300" fill="#7a7a7a"/><rect x="3.100" y="2" width="1.300" height="1.300" fill="#7a7a7a"/><rect x="3.100" y="13.750" width="1.300" height="1.300" fill="#7a7a7a"/><rect x="6.600" y="2.900" width="11.300" height="11" rx="0.500" fill="none" stroke="#7a7a7a" stroke-width="2"/><circle cx="12.250" cy="8.400" r="2.250" fill="none" stroke="#7a7a7a" stroke-width="1.800"/></svg>
<div class="tr" style="left:150.6px;top:578.0px;letter-spacing:-0.68px">Cell R3 C3<span class="n" style="margin-left:1.3px">.396</span></div>
<svg class="ic" style="left:548.10px;top:578.50px" width="21" height="21" viewBox="0 0 24 24" fill="#6b6b6b"><path d="M10 6L8.59 7.41 13.17 12l-4.58 4.59L10 18l6-6z"/></svg>
<svg class="ic" style="left:124.20px;top:600.90px;" width="20" height="17" viewBox="0 0 20 17"><rect x="0.600" y="2.00" width="1.300" height="1.300" fill="#7a7a7a"/><rect x="0.600" y="4.35" width="1.300" height="1.300" fill="#7a7a7a"/><rect x="0.600" y="6.70" width="1.300" height="1.300" fill="#7a7a7a"/><rect x="0.600" y="9.05" width="1.300" height="1.300" fill="#7a7a7a"/><rect x="0.600" y="11.40" width="1.300" height="1.300" fill="#7a7a7a"/><rect x="0.600" y="13.75" width="1.300" height="1.300" fill="#7a7a7a"/><rect x="3.100" y="2" width="1.300" height="1.300" fill="#7a7a7a"/><rect x="3.100" y="13.750" width="1.300" height="1.300" fill="#7a7a7a"/><rect x="6.600" y="2.900" width="11.300" height="11" rx="0.500" fill="none" stroke="#7a7a7a" stroke-width="2"/><circle cx="12.250" cy="8.400" r="2.250" fill="none" stroke="#7a7a7a" stroke-width="1.800"/></svg>
<div class="tr" style="left:150.6px;top:599.0px;letter-spacing:-0.68px">Cell R4 C1<span class="n" style="margin-left:1.3px">.176</span></div>
<svg class="ic" style="left:548.10px;top:599.50px" width="21" height="21" viewBox="0 0 24 24" fill="#6b6b6b"><path d="M10 6L8.59 7.41 13.17 12l-4.58 4.59L10 18l6-6z"/></svg>
<svg class="ic" style="left:124.20px;top:622.90px;" width="20" height="17" viewBox="0 0 20 17"><rect x="0.600" y="2.00" width="1.300" height="1.300" fill="#7a7a7a"/><rect x="0.600" y="4.35" width="1.300" height="1.300" fill="#7a7a7a"/><rect x="0.600" y="6.70" width="1.300" height="1.300" fill="#7a7a7a"/><rect x="0.600" y="9.05" width="1.300" height="1.300" fill="#7a7a7a"/><rect x="0.600" y="11.40" width="1.300" height="1.300" fill="#7a7a7a"/><rect x="0.600" y="13.75" width="1.300" height="1.300" fill="#7a7a7a"/><rect x="3.100" y="2" width="1.300" height="1.300" fill="#7a7a7a"/><rect x="3.100" y="13.750" width="1.300" height="1.300" fill="#7a7a7a"/><rect x="6.600" y="2.900" width="11.300" height="11" rx="0.500" fill="none" stroke="#7a7a7a" stroke-width="2"/><circle cx="12.250" cy="8.400" r="2.250" fill="none" stroke="#7a7a7a" stroke-width="1.800"/></svg>
<div class="tr" style="left:150.6px;top:621.0px;letter-spacing:-0.68px">Cell R4 C2<span class="n" style="margin-left:1.3px">.184</span></div>
<svg class="ic" style="left:548.10px;top:621.50px" width="21" height="21" viewBox="0 0 24 24" fill="#6b6b6b"><path d="M10 6L8.59 7.41 13.17 12l-4.58 4.59L10 18l6-6z"/></svg>
<svg class="ic" style="left:124.20px;top:644.90px;" width="20" height="17" viewBox="0 0 20 17"><rect x="0.600" y="2.00" width="1.300" height="1.300" fill="#7a7a7a"/><rect x="0.600" y="4.35" width="1.300" height="1.300" fill="#7a7a7a"/><rect x="0.600" y="6.70" width="1.300" height="1.300" fill="#7a7a7a"/><rect x="0.600" y="9.05" width="1.300" height="1.300" fill="#7a7a7a"/><rect x="0.600" y="11.40" width="1.300" height="1.300" fill="#7a7a7a"/><rect x="0.600" y="13.75" width="1.300" height="1.300" fill="#7a7a7a"/><rect x="3.100" y="2" width="1.300" height="1.300" fill="#7a7a7a"/><rect x="3.100" y="13.750" width="1.300" height="1.300" fill="#7a7a7a"/><rect x="6.600" y="2.900" width="11.300" height="11" rx="0.500" fill="none" stroke="#7a7a7a" stroke-width="2"/><circle cx="12.250" cy="8.400" r="2.250" fill="none" stroke="#7a7a7a" stroke-width="1.800"/></svg>
<div class="tr" style="left:150.6px;top:643.0px;letter-spacing:-0.68px">Cell R4 C3<span class="n" style="margin-left:1.3px">.397</span></div>
<svg class="ic" style="left:548.10px;top:643.50px" width="21" height="21" viewBox="0 0 24 24" fill="#6b6b6b"><path d="M10 6L8.59 7.41 13.17 12l-4.58 4.59L10 18l6-6z"/></svg>
<svg class="ic" style="left:124.20px;top:665.90px;" width="20" height="17" viewBox="0 0 20 17"><rect x="0.600" y="2.00" width="1.300" height="1.300" fill="#7a7a7a"/><rect x="0.600" y="4.35" width="1.300" height="1.300" fill="#7a7a7a"/><rect x="0.600" y="6.70" width="1.300" height="1.300" fill="#7a7a7a"/><rect x="0.600" y="9.05" width="1.300" height="1.300" fill="#7a7a7a"/><rect x="0.600" y="11.40" width="1.300" height="1.300" fill="#7a7a7a"/><rect x="0.600" y="13.75" width="1.300" height="1.300" fill="#7a7a7a"/><rect x="3.100" y="2" width="1.300" height="1.300" fill="#7a7a7a"/><rect x="3.100" y="13.750" width="1.300" height="1.300" fill="#7a7a7a"/><rect x="6.600" y="2.900" width="11.300" height="11" rx="0.500" fill="none" stroke="#7a7a7a" stroke-width="2"/><circle cx="12.250" cy="8.400" r="2.250" fill="none" stroke="#7a7a7a" stroke-width="1.800"/></svg>
<div class="tr" style="left:150.6px;top:664.0px;letter-spacing:-0.68px">Cell R5 C1<span class="n" style="margin-left:1.3px">.177</span></div>
<svg class="ic" style="left:548.10px;top:664.50px" width="21" height="21" viewBox="0 0 24 24" fill="#6b6b6b"><path d="M10 6L8.59 7.41 13.17 12l-4.58 4.59L10 18l6-6z"/></svg>
<svg class="ic" style="left:124.20px;top:687.90px;" width="20" height="17" viewBox="0 0 20 17"><rect x="0.600" y="2.00" width="1.300" height="1.300" fill="#7a7a7a"/><rect x="0.600" y="4.35" width="1.300" height="1.300" fill="#7a7a7a"/><rect x="0.600" y="6.70" width="1.300" height="1.300" fill="#7a7a7a"/><rect x="0.600" y="9.05" width="1.300" height="1.300" fill="#7a7a7a"/><rect x="0.600" y="11.40" width="1.300" height="1.300" fill="#7a7a7a"/><rect x="0.600" y="13.75" width="1.300" height="1.300" fill="#7a7a7a"/><rect x="3.100" y="2" width="1.300" height="1.300" fill="#7a7a7a"/><rect x="3.100" y="13.750" width="1.300" height="1.300" fill="#7a7a7a"/><rect x="6.600" y="2.900" width="11.300" height="11" rx="0.500" fill="none" stroke="#7a7a7a" stroke-width="2"/><circle cx="12.250" cy="8.400" r="2.250" fill="none" stroke="#7a7a7a" stroke-width="1.800"/></svg>
<div class="tr" style="left:150.6px;top:686.0px;letter-spacing:-0.68px">Cell R5 C2<span class="n" style="margin-left:1.3px">.185</span></div>
<svg class="ic" style="left:548.10px;top:686.50px" width="21" height="21" viewBox="0 0 24 24" fill="#6b6b6b"><path d="M10 6L8.59 7.41 13.17 12l-4.58 4.59L10 18l6-6z"/></svg>
<svg class="ic" style="left:124.20px;top:708.90px;" width="20" height="17" viewBox="0 0 20 17"><rect x="0.600" y="2.00" width="1.300" height="1.300" fill="#7a7a7a"/><rect x="0.600" y="4.35" width="1.300" height="1.300" fill="#7a7a7a"/><rect x="0.600" y="6.70" width="1.300" height="1.300" fill="#7a7a7a"/><rect x="0.600" y="9.05" width="1.300" height="1.300" fill="#7a7a7a"/><rect x="0.600" y="11.40" width="1.300" height="1.300" fill="#7a7a7a"/><rect x="0.600" y="13.75" width="1.300" height="1.300" fill="#7a7a7a"/><rect x="3.100" y="2" width="1.300" height="1.300" fill="#7a7a7a"/><rect x="3.100" y="13.750" width="1.300" height="1.300" fill="#7a7a7a"/><rect x="6.600" y="2.900" width="11.300" height="11" rx="0.500" fill="none" stroke="#7a7a7a" stroke-width="2"/><circle cx="12.250" cy="8.400" r="2.250" fill="none" stroke="#7a7a7a" stroke-width="1.800"/></svg>
<div class="tr" style="left:150.6px;top:707.0px;letter-spacing:-0.68px">Cell R5 C3<span class="n" style="margin-left:1.3px">.398</span></div>
<svg class="ic" style="left:548.10px;top:707.50px" width="21" height="21" viewBox="0 0 24 24" fill="#6b6b6b"><path d="M10 6L8.59 7.41 13.17 12l-4.58 4.59L10 18l6-6z"/></svg>
<svg class="ic" style="left:124.20px;top:730.90px;" width="20" height="17" viewBox="0 0 20 17"><rect x="0.600" y="2.00" width="1.300" height="1.300" fill="#7a7a7a"/><rect x="0.600" y="4.35" width="1.300" height="1.300" fill="#7a7a7a"/><rect x="0.600" y="6.70" width="1.300" height="1.300" fill="#7a7a7a"/><rect x="0.600" y="9.05" width="1.300" height="1.300" fill="#7a7a7a"/><rect x="0.600" y="11.40" width="1.300" height="1.300" fill="#7a7a7a"/><rect x="0.600" y="13.75" width="1.300" height="1.300" fill="#7a7a7a"/><rect x="3.100" y="2" width="1.300" height="1.300" fill="#7a7a7a"/><rect x="3.100" y="13.750" width="1.300" height="1.300" fill="#7a7a7a"/><rect x="6.600" y="2.900" width="11.300" height="11" rx="0.500" fill="none" stroke="#7a7a7a" stroke-width="2"/><circle cx="12.250" cy="8.400" r="2.250" fill="none" stroke="#7a7a7a" stroke-width="1.800"/></svg>
<div class="tr" style="left:150.6px;top:729.0px;letter-spacing:-0.68px">Cell R6 C1<span class="n" style="margin-left:1.3px">.178</span></div>
<svg class="ic" style="left:548.10px;top:729.50px" width="21" height="21" viewBox="0 0 24 24" fill="#6b6b6b"><path d="M10 6L8.59 7.41 13.17 12l-4.58 4.59L10 18l6-6z"/></svg>
<svg class="ic" style="left:124.20px;top:752.90px;" width="20" height="17" viewBox="0 0 20 17"><rect x="0.600" y="2.00" width="1.300" height="1.300" fill="#7a7a7a"/><rect x="0.600" y="4.35" width="1.300" height="1.300" fill="#7a7a7a"/><rect x="0.600" y="6.70" width="1.300" height="1.300" fill="#7a7a7a"/><rect x="0.600" y="9.05" width="1.300" height="1.300" fill="#7a7a7a"/><rect x="0.600" y="11.40" width="1.300" height="1.300" fill="#7a7a7a"/><rect x="0.600" y="13.75" width="1.300" height="1.300" fill="#7a7a7a"/><rect x="3.100" y="2" width="1.300" height="1.300" fill="#7a7a7a"/><rect x="3.100" y="13.750" width="1.300" height="1.300" fill="#7a7a7a"/><rect x="6.600" y="2.900" width="11.300" height="11" rx="0.500" fill="none" stroke="#7a7a7a" stroke-width="2"/><circle cx="12.250" cy="8.400" r="2.250" fill="none" stroke="#7a7a7a" stroke-width="1.800"/></svg>
<div class="tr" style="left:150.6px;top:751.0px;letter-spacing:-0.68px">Cell R6 C2<span class="n" style="margin-left:1.3px">.186</span></div>
<svg class="ic" style="left:548.10px;top:751.50px" width="21" height="21" viewBox="0 0 24 24" fill="#6b6b6b"><path d="M10 6L8.59 7.41 13.17 12l-4.58 4.59L10 18l6-6z"/></svg>
<svg class="ic" style="left:124.20px;top:773.90px;" width="20" height="17" viewBox="0 0 20 17"><rect x="0.600" y="2.00" width="1.300" height="1.300" fill="#7a7a7a"/><rect x="0.600" y="4.35" width="1.300" height="1.300" fill="#7a7a7a"/><rect x="0.600" y="6.70" width="1.300" height="1.300" fill="#7a7a7a"/><rect x="0.600" y="9.05" width="1.300" height="1.300" fill="#7a7a7a"/><rect x="0.600" y="11.40" width="1.300" height="1.300" fill="#7a7a7a"/><rect x="0.600" y="13.75" width="1.300" height="1.300" fill="#7a7a7a"/><rect x="3.100" y="2" width="1.300" height="1.300" fill="#7a7a7a"/><rect x="3.100" y="13.750" width="1.300" height="1.300" fill="#7a7a7a"/><rect x="6.600" y="2.900" width="11.300" height="11" rx="0.500" fill="none" stroke="#7a7a7a" stroke-width="2"/><circle cx="12.250" cy="8.400" r="2.250" fill="none" stroke="#7a7a7a" stroke-width="1.800"/></svg>
<div class="tr" style="left:150.6px;top:772.0px;letter-spacing:-0.68px">Cell R6 C3<span class="n" style="margin-left:1.3px">.399</span></div>
<svg class="ic" style="left:548.10px;top:772.50px" width="21" height="21" viewBox="0 0 24 24" fill="#6b6b6b"><path d="M10 6L8.59 7.41 13.17 12l-4.58 4.59L10 18l6-6z"/></svg>
<svg class="ic" style="left:124.20px;top:795.90px;" width="20" height="17" viewBox="0 0 20 17"><rect x="0.600" y="2.00" width="1.300" height="1.300" fill="#7a7a7a"/><rect x="0.600" y="4.35" width="1.300" height="1.300" fill="#7a7a7a"/><rect x="0.600" y="6.70" width="1.300" height="1.300" fill="#7a7a7a"/><rect x="0.600" y="9.05" width="1.300" height="1.300" fill="#7a7a7a"/><rect x="0.600" y="11.40" width="1.300" height="1.300" fill="#7a7a7a"/><rect x="0.600" y="13.75" width="1.300" height="1.300" fill="#7a7a7a"/><rect x="3.100" y="2" width="1.300" height="1.300" fill="#7a7a7a"/><rect x="3.100" y="13.750" width="1.300" height="1.300" fill="#7a7a7a"/><rect x="6.600" y="2.900" width="11.300" height="11" rx="0.500" fill="none" stroke="#7a7a7a" stroke-width="2"/><circle cx="12.250" cy="8.400" r="2.250" fill="none" stroke="#7a7a7a" stroke-width="1.800"/></svg>
<div class="tr" style="left:150.6px;top:794.0px;letter-spacing:-0.68px">Cell R7 C1<span class="n" style="margin-left:1.3px">.179</span></div>
<svg class="ic" style="left:548.10px;top:794.50px" width="21" height="21" viewBox="0 0 24 24" fill="#6b6b6b"><path d="M10 6L8.59 7.41 13.17 12l-4.58 4.59L10 18l6-6z"/></svg>
<svg class="ic" style="left:124.20px;top:816.90px;" width="20" height="17" viewBox="0 0 20 17"><rect x="0.600" y="2.00" width="1.300" height="1.300" fill="#7a7a7a"/><rect x="0.600" y="4.35" width="1.300" height="1.300" fill="#7a7a7a"/><rect x="0.600" y="6.70" width="1.300" height="1.300" fill="#7a7a7a"/><rect x="0.600" y="9.05" width="1.300" height="1.300" fill="#7a7a7a"/><rect x="0.600" y="11.40" width="1.300" height="1.300" fill="#7a7a7a"/><rect x="0.600" y="13.75" width="1.300" height="1.300" fill="#7a7a7a"/><rect x="3.100" y="2" width="1.300" height="1.300" fill="#7a7a7a"/><rect x="3.100" y="13.750" width="1.300" height="1.300" fill="#7a7a7a"/><rect x="6.600" y="2.900" width="11.300" height="11" rx="0.500" fill="none" stroke="#7a7a7a" stroke-width="2"/><circle cx="12.250" cy="8.400" r="2.250" fill="none" stroke="#7a7a7a" stroke-width="1.800"/></svg>
<div class="tr" style="left:150.6px;top:815.0px;letter-spacing:-0.68px">Cell R7 C2<span class="n" style="margin-left:1.3px">.187</span></div>
<svg class="ic" style="left:548.10px;top:815.50px" width="21" height="21" viewBox="0 0 24 24" fill="#6b6b6b"><path d="M10 6L8.59 7.41 13.17 12l-4.58 4.59L10 18l6-6z"/></svg>
<svg class="ic" style="left:124.20px;top:838.90px;" width="20" height="17" viewBox="0 0 20 17"><rect x="0.600" y="2.00" width="1.300" height="1.300" fill="#7a7a7a"/><rect x="0.600" y="4.35" width="1.300" height="1.300" fill="#7a7a7a"/><rect x="0.600" y="6.70" width="1.300" height="1.300" fill="#7a7a7a"/><rect x="0.600" y="9.05" width="1.300" height="1.300" fill="#7a7a7a"/><rect x="0.600" y="11.40" width="1.300" height="1.300" fill="#7a7a7a"/><rect x="0.600" y="13.75" width="1.300" height="1.300" fill="#7a7a7a"/><rect x="3.100" y="2" width="1.300" height="1.300" fill="#7a7a7a"/><rect x="3.100" y="13.750" width="1.300" height="1.300" fill="#7a7a7a"/><rect x="6.600" y="2.900" width="11.300" height="11" rx="0.500" fill="none" stroke="#7a7a7a" stroke-width="2"/><circle cx="12.250" cy="8.400" r="2.250" fill="none" stroke="#7a7a7a" stroke-width="1.800"/></svg>
<div class="tr" style="left:150.6px;top:837.0px;letter-spacing:-0.68px">Cell R7 C3<span class="n" style="margin-left:1.3px">.400</span></div>
<svg class="ic" style="left:548.10px;top:837.50px" width="21" height="21" viewBox="0 0 24 24" fill="#6b6b6b"><path d="M10 6L8.59 7.41 13.17 12l-4.58 4.59L10 18l6-6z"/></svg>
<svg class="ic" style="left:108.70px;top:861.20px;" width="18" height="17" viewBox="0 0 18 17"><rect x="1.800" y="1.700" width="14.400" height="13.600" rx="0.800" fill="none" stroke="#7a7a7a" stroke-width="1.600"/><path d="M1.800 5h14.400" stroke="#7a7a7a" stroke-width="1.900"/><path d="M1.800 8.600h14.400M1.800 11.900h14.400M6.600 5v10.300M11.400 5v10.300" stroke="#7a7a7a" stroke-width="1.400"/></svg>
<div class="tr" style="left:134.8px;top:859.0px;letter-spacing:-0.2px">Goals<span class="n">.1221</span></div>
<svg class="ic" style="left:548.10px;top:859.50px" width="21" height="21" viewBox="0 0 24 24" fill="#6b6b6b"><path d="M10 6L8.59 7.41 13.17 12l-4.58 4.59L10 18l6-6z"/></svg>
<svg class="ic" style="left:106.70px;top:882.30px;" width="22" height="15" viewBox="0 0 22 15"><path d="M15.200 3.200H3a1.300 1.300 0 0 0-1.300 1.300v7.400a1.300 1.300 0 0 0 1.300 1.300h16a1.300 1.300 0 0 0 1.300-1.300V4.500a1.300 1.300 0 0 0-1.300-1.300h-1.200" fill="none" stroke="#7a7a7a" stroke-width="1.600"/><path d="M6.300 7l3.300 3.400 6.300-8.600" fill="none" stroke="#7a7a7a" stroke-width="1.900"/></svg>
<div class="tr" style="left:134.8px;top:880.0px;letter-spacing:0.45px">Intervention<span class="n">.1233</span></div>
<svg class="ic" style="left:548.10px;top:880.50px" width="21" height="21" viewBox="0 0 24 24" fill="#6b6b6b"><path d="M10 6L8.59 7.41 13.17 12l-4.58 4.59L10 18l6-6z"/></svg>
</div></div>
<div id="tscroll"></div>
<div class="arr up" style="left:575.8px;top:168.4px"></div>
<div class="arr dn" style="left:575.8px;top:880.6px"></div>
<div class="thumb" style="left:576.200px;top:373.600px;width:8.600px;height:476px"></div>
<div class="hl" style="left:92.200px;top:400.500px;width:263.600px;height:33.500px;border-radius:6px"></div>

<div id="split"></div>
<svg class="ic" style="left:598.9px;top:469.8px" width="6" height="30" viewBox="0 0 6 30"><g fill="#cdcdcd"><rect x="0" y="0.2" width="2" height="2"/><rect x="3.1" y="0.2" width="2" height="2"/><rect x="0" y="3.8" width="2" height="2"/><rect x="3.1" y="3.8" width="2" height="2"/><rect x="0" y="7.4" width="2" height="2"/><rect x="3.1" y="7.4" width="2" height="2"/><rect x="0" y="11.0" width="2" height="2"/><rect x="3.1" y="11.0" width="2" height="2"/><rect x="0" y="14.6" width="2" height="2"/><rect x="3.1" y="14.6" width="2" height="2"/><rect x="0" y="18.2" width="2" height="2"/><rect x="3.1" y="18.2" width="2" height="2"/><rect x="0" y="21.8" width="2" height="2"/><rect x="3.1" y="21.8" width="2" height="2"/><rect x="0" y="25.4" width="2" height="2"/><rect x="3.1" y="25.4" width="2" height="2"/></g></svg>

<!-- right panel -->
<div id="rp"></div>
<div id="rp-title"><span>Physiotherapy MSK Evaluation</span></div>
<div id="gridtab">GRID</div>
<div id="rclip"><div id="rin">
  <div class="abs" style="left:624.6px;top:136.6px;font-size:16px;line-height:20px;color:#212121">Grid details</div>
  <div class="abs" style="left:1689.4px;top:140.300px;font-size:12.700px;line-height:16px;color:#212121">Editing</div>
  <div class="abs" style="left:1774.200px;top:140.300px;font-size:12.700px;line-height:16px;color:#212121">Preview</div>
  <div class="abs" style="left:1741px;top:142px;width:26.500px;height:12.800px;border-radius:6.400px;background:#a6a6a6"></div>
  <div class="abs" style="left:1735.200px;top:138.800px;width:18.400px;height:18.400px;border-radius:50%;background:#fafafa;box-shadow:0 1px 3px rgba(0,0,0,.4)"></div>
  <div class="rule" style="left:624px;top:158px;width:1195px"></div>
  <div class="cbox" style="left:635.00px;width:378px"></div>
<svg class="ic" style="left:723.60px;top:184.70px" width="13" height="13" viewBox="0 0 24 24" fill="#616161"><path d="M21 3H3c-1.1 0-2 .9-2 2v12c0 1.1.9 2 2 2h5v2h8v-2h5c1.1 0 1.99-.9 1.99-2L23 5c0-1.1-.9-2-2-2zm0 14H3V5h18v12z"/></svg>
<svg class="ic" style="left:908.80px;top:184.00px" width="14.4" height="14.4" viewBox="0 0 24 24" fill="#616161"><path d="M19 8H5c-1.66 0-3 1.34-3 3v6h4v4h12v-4h4v-6c0-1.66-1.34-3-3-3zm-3 11H8v-5h8v5zm3-7c-.55 0-1-.45-1-1s.45-1 1-1 1 .45 1 1-.45 1-1 1zm-1-9H6v4h12V3z"/></svg>
<div class="cpx" style="left:698.6px">300px</div>
<div class="cpx" style="left:885.1px">200px</div>
<div class="hcell hsel" style="left:635.00px;width:378px">Problem list</div>
<div class="tcell" style="left:635.00px;width:378px;top:262.4px;height:26.2px"></div>
<svg class="ic" style="left:638.40px;top:270.20px;" width="20.2" height="11.4" viewBox="0 0 20.2 11.4"><rect x="1.8" y="1.8" width="16.599999999999998" height="7.800000000000001" rx="3.9000000000000004" fill="none" stroke="#555555" stroke-width="1.75"/><path d="M4.3 5.9l1.7 1.6 3.6-3.7" stroke="#555555" stroke-width="0.9" fill="none"/></svg>
<div class="ttxt" style="left:659.4px;top:268px">Text</div>
<div class="tcell" style="left:635.00px;width:378px;top:293.4px;height:26.2px"></div>
<svg class="ic" style="left:638.40px;top:301.20px;" width="20.2" height="11.4" viewBox="0 0 20.2 11.4"><rect x="1.8" y="1.8" width="16.599999999999998" height="7.800000000000001" rx="3.9000000000000004" fill="none" stroke="#555555" stroke-width="1.75"/><path d="M4.3 5.9l1.7 1.6 3.6-3.7" stroke="#555555" stroke-width="0.9" fill="none"/></svg>
<div class="ttxt" style="left:659.4px;top:299px">Text</div>
<div class="tcell" style="left:635.00px;width:378px;top:324.4px;height:26.2px"></div>
<svg class="ic" style="left:638.40px;top:332.20px;" width="20.2" height="11.4" viewBox="0 0 20.2 11.4"><rect x="1.8" y="1.8" width="16.599999999999998" height="7.800000000000001" rx="3.9000000000000004" fill="none" stroke="#555555" stroke-width="1.75"/><path d="M4.3 5.9l1.7 1.6 3.6-3.7" stroke="#555555" stroke-width="0.9" fill="none"/></svg>
<div class="ttxt" style="left:659.4px;top:330px">Text</div>
<div class="tcell" style="left:635.00px;width:378px;top:355.4px;height:26.2px"></div>
<svg class="ic" style="left:638.40px;top:363.20px;" width="20.2" height="11.4" viewBox="0 0 20.2 11.4"><rect x="1.8" y="1.8" width="16.599999999999998" height="7.800000000000001" rx="3.9000000000000004" fill="none" stroke="#555555" stroke-width="1.75"/><path d="M4.3 5.9l1.7 1.6 3.6-3.7" stroke="#555555" stroke-width="0.9" fill="none"/></svg>
<div class="ttxt" style="left:659.4px;top:361px">Text</div>
<div class="tcell" style="left:635.00px;width:378px;top:385.9px;height:25.8px"></div>
<svg class="ic" style="left:638.40px;top:393.20px;" width="20.2" height="11.4" viewBox="0 0 20.2 11.4"><rect x="1.8" y="1.8" width="16.599999999999998" height="7.800000000000001" rx="3.9000000000000004" fill="none" stroke="#555555" stroke-width="1.75"/><path d="M4.3 5.9l1.7 1.6 3.6-3.7" stroke="#555555" stroke-width="0.9" fill="none"/></svg>
<div class="ttxt" style="left:659.4px;top:391px">Text</div>
<div class="tcell" style="left:635.00px;width:378px;top:416.9px;height:25.8px"></div>
<svg class="ic" style="left:638.40px;top:424.20px;" width="20.2" height="11.4" viewBox="0 0 20.2 11.4"><rect x="1.8" y="1.8" width="16.599999999999998" height="7.800000000000001" rx="3.9000000000000004" fill="none" stroke="#555555" stroke-width="1.75"/><path d="M4.3 5.9l1.7 1.6 3.6-3.7" stroke="#555555" stroke-width="0.9" fill="none"/></svg>
<div class="ttxt" style="left:659.4px;top:422px">Text</div>
<div class="cbox" style="left:1017.00px;width:377.6px"></div>
<svg class="ic" style="left:1105.60px;top:184.70px" width="13" height="13" viewBox="0 0 24 24" fill="#616161"><path d="M21 3H3c-1.1 0-2 .9-2 2v12c0 1.1.9 2 2 2h5v2h8v-2h5c1.1 0 1.99-.9 1.99-2L23 5c0-1.1-.9-2-2-2zm0 14H3V5h18v12z"/></svg>
<svg class="ic" style="left:1290.80px;top:184.00px" width="14.4" height="14.4" viewBox="0 0 24 24" fill="#616161"><path d="M19 8H5c-1.66 0-3 1.34-3 3v6h4v4h12v-4h4v-6c0-1.66-1.34-3-3-3zm-3 11H8v-5h8v5zm3-7c-.55 0-1-.45-1-1s.45-1 1-1 1 .45 1 1-.45 1-1 1zm-1-9H6v4h12V3z"/></svg>
<div class="cpx" style="left:1080.6px">400px</div>
<div class="cpx" style="left:1267.1px">200px</div>
<div class="hcell" style="left:1017.00px;width:377.6px">Treatment plan</div>
<div class="tcell" style="left:1017.00px;width:377.6px;top:262.4px;height:26.2px"></div>
<svg class="ic" style="left:1020.40px;top:270.20px;" width="20.2" height="11.4" viewBox="0 0 20.2 11.4"><rect x="1.8" y="1.8" width="16.599999999999998" height="7.800000000000001" rx="3.9000000000000004" fill="none" stroke="#555555" stroke-width="1.75"/><path d="M4.3 5.9l1.7 1.6 3.6-3.7" stroke="#555555" stroke-width="0.9" fill="none"/></svg>
<div class="ttxt" style="left:1041.4px;top:268px">Text</div>
<div class="tcell" style="left:1017.00px;width:377.6px;top:293.4px;height:26.2px"></div>
<svg class="ic" style="left:1020.40px;top:301.20px;" width="20.2" height="11.4" viewBox="0 0 20.2 11.4"><rect x="1.8" y="1.8" width="16.599999999999998" height="7.800000000000001" rx="3.9000000000000004" fill="none" stroke="#555555" stroke-width="1.75"/><path d="M4.3 5.9l1.7 1.6 3.6-3.7" stroke="#555555" stroke-width="0.9" fill="none"/></svg>
<div class="ttxt" style="left:1041.4px;top:299px">Text</div>
<div class="tcell" style="left:1017.00px;width:377.6px;top:324.4px;height:26.2px"></div>
<svg class="ic" style="left:1020.40px;top:332.20px;" width="20.2" height="11.4" viewBox="0 0 20.2 11.4"><rect x="1.8" y="1.8" width="16.599999999999998" height="7.800000000000001" rx="3.9000000000000004" fill="none" stroke="#555555" stroke-width="1.75"/><path d="M4.3 5.9l1.7 1.6 3.6-3.7" stroke="#555555" stroke-width="0.9" fill="none"/></svg>
<div class="ttxt" style="left:1041.4px;top:330px">Text</div>
<div class="tcell" style="left:1017.00px;width:377.6px;top:355.4px;height:26.2px"></div>
<svg class="ic" style="left:1020.40px;top:363.20px;" width="20.2" height="11.4" viewBox="0 0 20.2 11.4"><rect x="1.8" y="1.8" width="16.599999999999998" height="7.800000000000001" rx="3.9000000000000004" fill="none" stroke="#555555" stroke-width="1.75"/><path d="M4.3 5.9l1.7 1.6 3.6-3.7" stroke="#555555" stroke-width="0.9" fill="none"/></svg>
<div class="ttxt" style="left:1041.4px;top:361px">Text</div>
<div class="tcell" style="left:1017.00px;width:377.6px;top:385.9px;height:25.8px"></div>
<svg class="ic" style="left:1020.40px;top:393.20px;" width="20.2" height="11.4" viewBox="0 0 20.2 11.4"><rect x="1.8" y="1.8" width="16.599999999999998" height="7.800000000000001" rx="3.9000000000000004" fill="none" stroke="#555555" stroke-width="1.75"/><path d="M4.3 5.9l1.7 1.6 3.6-3.7" stroke="#555555" stroke-width="0.9" fill="none"/></svg>
<div class="ttxt" style="left:1041.4px;top:391px">Text</div>
<div class="tcell" style="left:1017.00px;width:377.6px;top:416.9px;height:25.8px"></div>
<svg class="ic" style="left:1020.40px;top:424.20px;" width="20.2" height="11.4" viewBox="0 0 20.2 11.4"><rect x="1.8" y="1.8" width="16.599999999999998" height="7.800000000000001" rx="3.9000000000000004" fill="none" stroke="#555555" stroke-width="1.75"/><path d="M4.3 5.9l1.7 1.6 3.6-3.7" stroke="#555555" stroke-width="0.9" fill="none"/></svg>
<div class="ttxt" style="left:1041.4px;top:422px">Text</div>
<div class="cbox" style="left:1399.40px;width:377.2px"></div>
<svg class="ic" style="left:1488.00px;top:184.70px" width="13" height="13" viewBox="0 0 24 24" fill="#616161"><path d="M21 3H3c-1.1 0-2 .9-2 2v12c0 1.1.9 2 2 2h5v2h8v-2h5c1.1 0 1.99-.9 1.99-2L23 5c0-1.1-.9-2-2-2zm0 14H3V5h18v12z"/></svg>
<svg class="ic" style="left:1673.20px;top:184.00px" width="14.4" height="14.4" viewBox="0 0 24 24" fill="#616161"><path d="M19 8H5c-1.66 0-3 1.34-3 3v6h4v4h12v-4h4v-6c0-1.66-1.34-3-3-3zm-3 11H8v-5h8v5zm3-7c-.55 0-1-.45-1-1s.45-1 1-1 1 .45 1 1-.45 1-1 1zm-1-9H6v4h12V3z"/></svg>
<div class="cpx" style="left:1463.0px">400px</div>
<div class="cpx" style="left:1649.5px">200px</div>
<div class="hcell" style="left:1399.40px;width:377.2px">Frequency of treatment</div>
<div class="tcell" style="left:1399.40px;width:377.2px;top:262.4px;height:26.2px"></div>
<svg class="ic" style="left:1402.80px;top:270.20px;" width="20.2" height="11.4" viewBox="0 0 20.2 11.4"><rect x="1.8" y="1.8" width="16.599999999999998" height="7.800000000000001" rx="3.9000000000000004" fill="none" stroke="#555555" stroke-width="1.75"/><path d="M4.3 5.9l1.7 1.6 3.6-3.7" stroke="#555555" stroke-width="0.9" fill="none"/></svg>
<div class="ttxt" style="left:1423.8px;top:268px">Text</div>
<div class="tcell" style="left:1399.40px;width:377.2px;top:293.4px;height:26.2px"></div>
<svg class="ic" style="left:1402.80px;top:301.20px;" width="20.2" height="11.4" viewBox="0 0 20.2 11.4"><rect x="1.8" y="1.8" width="16.599999999999998" height="7.800000000000001" rx="3.9000000000000004" fill="none" stroke="#555555" stroke-width="1.75"/><path d="M4.3 5.9l1.7 1.6 3.6-3.7" stroke="#555555" stroke-width="0.9" fill="none"/></svg>
<div class="ttxt" style="left:1423.8px;top:299px">Text</div>
<div class="tcell" style="left:1399.40px;width:377.2px;top:324.4px;height:26.2px"></div>
<svg class="ic" style="left:1402.80px;top:332.20px;" width="20.2" height="11.4" viewBox="0 0 20.2 11.4"><rect x="1.8" y="1.8" width="16.599999999999998" height="7.800000000000001" rx="3.9000000000000004" fill="none" stroke="#555555" stroke-width="1.75"/><path d="M4.3 5.9l1.7 1.6 3.6-3.7" stroke="#555555" stroke-width="0.9" fill="none"/></svg>
<div class="ttxt" style="left:1423.8px;top:330px">Text</div>
<div class="tcell" style="left:1399.40px;width:377.2px;top:355.4px;height:26.2px"></div>
<svg class="ic" style="left:1402.80px;top:363.20px;" width="20.2" height="11.4" viewBox="0 0 20.2 11.4"><rect x="1.8" y="1.8" width="16.599999999999998" height="7.800000000000001" rx="3.9000000000000004" fill="none" stroke="#555555" stroke-width="1.75"/><path d="M4.3 5.9l1.7 1.6 3.6-3.7" stroke="#555555" stroke-width="0.9" fill="none"/></svg>
<div class="ttxt" style="left:1423.8px;top:361px">Text</div>
<div class="tcell" style="left:1399.40px;width:377.2px;top:385.9px;height:25.8px"></div>
<svg class="ic" style="left:1402.80px;top:393.20px;" width="20.2" height="11.4" viewBox="0 0 20.2 11.4"><rect x="1.8" y="1.8" width="16.599999999999998" height="7.800000000000001" rx="3.9000000000000004" fill="none" stroke="#555555" stroke-width="1.75"/><path d="M4.3 5.9l1.7 1.6 3.6-3.7" stroke="#555555" stroke-width="0.9" fill="none"/></svg>
<div class="ttxt" style="left:1423.8px;top:391px">Text</div>
<div class="tcell" style="left:1399.40px;width:377.2px;top:416.9px;height:25.8px"></div>
<svg class="ic" style="left:1402.80px;top:424.20px;" width="20.2" height="11.4" viewBox="0 0 20.2 11.4"><rect x="1.8" y="1.8" width="16.599999999999998" height="7.800000000000001" rx="3.9000000000000004" fill="none" stroke="#555555" stroke-width="1.75"/><path d="M4.3 5.9l1.7 1.6 3.6-3.7" stroke="#555555" stroke-width="0.9" fill="none"/></svg>
<div class="ttxt" style="left:1423.8px;top:422px">Text</div>
  <svg class="ic" style="left:1787.20px;top:326.20px" width="22.6" height="22.6" viewBox="0 0 24 24" fill="#212121"><path d="M13 7h-2v4H7v2h4v4h2v-4h4v-2h-4V7zm-1-5C6.48 2 2 6.48 2 12s4.48 10 10 10 10-4.48 10-10S17.52 2 12 2zm0 18c-4.41 0-8-3.59-8-8s3.59-8 8-8 8 3.59 8 8-3.59 8-8 8z"/></svg>
  <svg class="ic" style="left:1194.30px;top:449.30px" width="22.6" height="22.6" viewBox="0 0 24 24" fill="#212121"><path d="M13 7h-2v4H7v2h4v4h2v-4h4v-2h-4V7zm-1-5C6.48 2 2 6.48 2 12s4.48 10 10 10 10-4.48 10-10S17.52 2 12 2zm0 18c-4.41 0-8-3.59-8-8s3.59-8 8-8 8 3.59 8 8-3.59 8-8 8z"/></svg>
  <div id="h2">Grid details</div>
  <div class="rule" style="left:651px;top:578.6px;width:1142px"></div>
  <svg class="ic" style="left:1762.90px;top:549.80px" width="21.8" height="21.8" viewBox="0 0 24 24" fill="#212121"><path d="M12 8c1.1 0 2-.9 2-2s-.9-2-2-2-2 .9-2 2 .9 2 2 2zm0 2c-1.1 0-2 .9-2 2s.9 2 2 2 2-.9 2-2-.9-2-2-2zm0 6c-1.1 0-2 .9-2 2s.9 2 2 2 2-.9 2-2-.9-2-2-2z"/></svg>

  <div class="lbl" style="top:615.6px">Header</div>
  <div class="val" style="top:611.8px">Problem list</div>
  <div class="ul" style="top:631.7px;width:224.7px"></div>
  <div class="abs" style="left:1170.3px;top:616.2px;font-size:12.6px;line-height:16px;color:#424242">*</div>
  <div class="lbl" style="top:666.8px">Nb of column span</div>
  <div class="val" style="top:662.6px">1</div>
  <div class="ul" style="top:683px;width:54px"></div>
  <div class="lbl" style="top:716.8px">Number of rows span</div>
  <div class="val" style="top:713.8px">1</div>
  <div class="ul" style="top:733.8px;width:54px"></div>
  <div class="lbl" style="top:764.8px">Horizontal alignment</div>
  <div class="circ" style="top:755px"></div>
  <svg class="ic" style="left:942.10px;top:762.10px" width="21.4" height="21.4" viewBox="0 0 24 24" fill="#212121"><path d="M15 15H3v2h12v-2zm0-8H3v2h12V7zM3 13h18v-2H3v2zm0 8h18v-2H3v2zM3 3v2h18V3H3z"/></svg>
  <svg class="ic" style="left:978.10px;top:762.10px" width="21.4" height="21.4" viewBox="0 0 24 24" fill="#212121"><path d="M7 15v2h10v-2H7zm-4 6h18v-2H3v2zm0-8h18v-2H3v2zm4-6v2h10V7H7zM3 3v2h18V3H3z"/></svg>
  <svg class="ic" style="left:1014.10px;top:762.10px" width="21.4" height="21.4" viewBox="0 0 24 24" fill="#212121"><path d="M3 21h18v-2H3v2zm6-4h12v-2H9v2zm-6-4h18v-2H3v2zm6-4h12V7H9v2zM3 3v2h18V3H3z"/></svg>
  <div class="lbl" style="top:809.8px">Vertical alignment</div>
  <div class="circ" style="top:800px"></div>
  <svg class="ic" style="left:942.10px;top:807.10px" width="21.4" height="21.4" viewBox="0 0 24 24" fill="#212121"><path d="M8 11h3v10h2V11h3l-4-4-4 4zM4 3v2h16V3H4z"/></svg>
  <svg class="ic" style="left:978.10px;top:807.10px" width="21.4" height="21.4" viewBox="0 0 24 24" fill="#212121"><path d="M8 19h3v4h2v-4h3l-4-4-4 4zm8-14h-3V1h-2v4H8l4 4 4-4zM4 11v2h16v-2H4z"/></svg>
  <svg class="ic" style="left:1014.10px;top:807.10px" width="21.4" height="21.4" viewBox="0 0 24 24" fill="#212121"><path d="M16 13h-3V3h-2v10H8l4 4 4-4zM4 19v2h16v-2H4z"/></svg>
  <div class="lbl" style="top:854.8px">Text orientation</div>
  <div class="circ" style="top:845px"></div>
  <svg class="ic" style="left:942.10px;top:852.10px" width="21.4" height="21.4" viewBox="0 0 24 24" fill="#212121"><path d="M12.75 3h-1.5L6.5 14h2.1l.9-2.2h5l.9 2.2h2.1L12.75 3zm-2.62 7L12 4.98 13.87 10h-3.74zm10.37 8l-3-3v2H5v2h12.5v2l3-3z"/></svg>
  <svg class="ic" style="left:978.10px;top:852.10px" width="21.4" height="21.4" viewBox="0 0 24 24" fill="#212121"><path d="M3 12v1.5l11 4.75v-2.1l-2.2-.9v-5l2.2-.9v-2.1L3 12zm7 2.62l-5.02-1.87L10 10.88v3.74zm8-10.37l-3 3h2v12.5h2V7.25h2l-3-3z"/></svg>
  <svg class="ic" style="left:1014.10px;top:852.10px" width="21.4" height="21.4" viewBox="0 0 24 24" fill="#212121"><path d="M21 12v-1.5L10 5.75v2.1l2.2.9v5l-2.2.9v2.1L21 12zm-7-2.62l5.02 1.87L14 13.12V9.38zM6 19.75l3-3H7V4.25H5v12.5H3l3 3z"/></svg>
</div></div>
<div id="rp-line"></div>
<!-- right scrollbar -->
<div class="abs" style="left:1829px;top:147px;width:15px;height:749px;background:#fbfbfb"></div>
<div class="arr up" style="left:1832.200px;top:157.600px"></div>
<div class="arr dn" style="left:1832.200px;top:881.400px"></div>
<div class="thumb" style="left:1832px;top:190.800px;width:8.800px;height:682px"></div>

<div id="fab"></div>
<svg class="ic" style="left:1793.10px;top:84.30px" width="20.6" height="20.6" viewBox="0 0 24 24" fill="#ffffff"><path d="M17 3H5c-1.11 0-2 .9-2 2v14c0 1.1.89 2 2 2h14c1.1 0 2-.9 2-2V7l-4-4zm2 16H5V5h11.17L19 7.83V19zm-7-7c-1.66 0-3 1.34-3 3s1.34 3 3 3 3-1.34 3-3-1.34-3-3-3zM6 6h9v4H6z"/></svg>

<!-- console -->
<div id="cons"><span>Console</span></div>
<svg class="ic" style="left:1804px;top:925px" width="14" height="12" viewBox="0 0 14 12"><path d="M2.800 4.300l4.200 4.300 4.200-4.300" fill="none" stroke="#6f6f6f" stroke-width="1.300"/></svg>

<!-- context menu -->
<div id="menu"></div>
<div class="mi" style="top:599.5px;letter-spacing:-0.24px">Remove cell</div>
<div class="mi" style="top:642.5px;letter-spacing:-0.25px">Remove line</div>
<div class="mi" style="top:685.5px;letter-spacing:-0.17px">Remove column</div>
<div class="mi" style="top:731.3px;letter-spacing:0px">Move column to the right</div>
<div class="mi dis" style="top:774.3px;letter-spacing:0.04px">Move column left</div>
<div class="mi dis" style="top:818.2px;letter-spacing:-0.1px">Move line up</div>
<div class="mi" style="top:861.2px;letter-spacing:-0.07px">Move line down</div>
<div class="msep" style="top:716.4px"></div>
<div class="msep" style="top:803.2px"></div>
<div class="hl" style="left:1569px;top:580.800px;width:241.400px;height:315.400px;border-radius:31px"></div>
<div class="hl" style="left:1756.200px;top:536px;width:38px;height:58px;border-radius:6px"></div>
<!-- mouse cursor -->
<svg class="ic" style="left:1777.500px;top:562.300px" width="14.700" height="22" viewBox="0 0 14 21"><path d="M1 1v15.6l3.7-3.500 2.600 6.200 2.400-1-2.600-6.100h5.100z" fill="#fff" stroke="#000" stroke-width="1.100" stroke-linejoin="round"/></svg>

</div>
</body>
</html>
